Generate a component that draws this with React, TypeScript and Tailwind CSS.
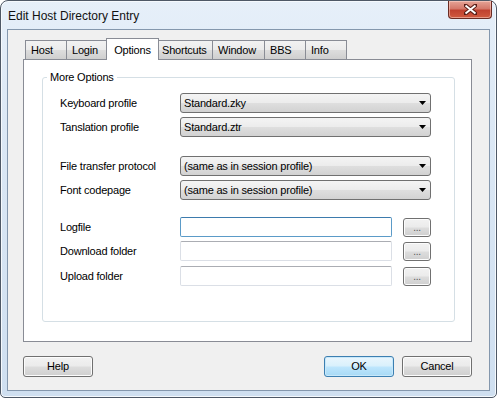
import React from 'react'

const tabs = [
  { label: 'Host', w: 'w-[42px]' },
  { label: 'Login', w: 'w-[41px]' },
  { label: 'Options', w: 'w-[53px]', active: true },
  { label: 'Shortcuts', w: 'w-[56px]' },
  { label: 'Window', w: 'w-[52px]' },
  { label: 'BBS', w: 'w-[41px]' },
  { label: 'Info', w: 'w-[41px]' },
]

function Combo({ value, className = '' }: { value: string; className?: string }) {
  return (
    <div
      className={`flex h-[20px] w-[251px] items-center justify-between rounded-[3px] border border-[#707070] bg-[linear-gradient(180deg,#f4f4f4_0%,#ececec_48%,#dedede_52%,#d2d2d2_100%)] pl-[3px] pr-[4px] ${className}`}
    >
      <span className="leading-none">{value}</span>
      <svg width="7" height="4" viewBox="0 0 7 4">
        <polygon points="0,0 7,0 3.5,4" fill="#000" />
      </svg>
    </div>
  )
}

function Field({ focused, className = '' }: { focused?: boolean; className?: string }) {
  return (
    <div className={`flex items-start gap-[11px] ${className}`}>
      <div
        className={`h-[20px] w-[212px] rounded-[2px] border bg-white ${
          focused
            ? 'border-[#5b9bc8] border-t-[#3d7bad]'
            : 'border-[#dbdfe6] border-t-[#abadb3]'
        }`}
      />
      <Btn className="mt-px h-[19px] w-[28px] text-[10px] text-[#555]">...</Btn>
    </div>
  )
}

function Btn({
  children,
  className = '',
  primary,
}: {
  children: React.ReactNode
  className?: string
  primary?: boolean
}) {
  return (
    <div
      className={`flex items-center justify-center rounded-[3px] border ${
        primary
          ? 'border-[#3c7fb1] bg-[linear-gradient(180deg,#eaf6fd_0%,#d9f0fc_48%,#bee6fd_52%,#a7d9f5_100%)] shadow-[inset_0_0_0_1px_#c8e8fa]'
          : 'border-[#707070] bg-[linear-gradient(180deg,#f2f2f2_0%,#ebebeb_48%,#dddddd_52%,#cfcfcf_100%)] shadow-[inset_0_0_0_1px_#fcfcfc]'
      } ${className}`}
    >
      {children}
    </div>
  )
}

const Label = ({ children }: { children: React.ReactNode }) => (
  <span className="w-[120px] shrink-0">{children}</span>
)

export default function App() {
  return (
    <div className="h-[398px] w-[497px] bg-white font-['Liberation_Sans',Arial,sans-serif] text-[11px] tracking-[-0.2px] text-black">
      {/* Window frame */}
      <div className="flex h-full w-full flex-col rounded-t-[8px] rounded-b-[5px] border border-[#4e5866] bg-[linear-gradient(180deg,#e6eff9_0%,#dce8f5_30%,#cfdff0_100%)] shadow-[inset_0_0_0_1px_#f5f9fd]">
        {/* Title bar */}
        <div className="flex h-[28px] shrink-0 items-start justify-between">
          <span className="mt-[6px] pl-[7px] text-[12px] tracking-normal text-[#111]">Edit Host Directory Entry</span>
          <div className="mr-[4px] flex h-[18px] w-[44px] items-center justify-center rounded-b-[4px] border border-t-0 border-[#6a2b23] bg-[linear-gradient(180deg,#e6a497_0%,#d4786a_45%,#c0412f_55%,#d05a3f_100%)] shadow-[inset_0_0_0_1px_rgba(255,220,210,0.5)]">
            <svg width="13" height="11" viewBox="0 0 13 11">
              <path
                d="M1 1 L12 10 M12 1 L1 10"
                stroke="#5a1d16"
                strokeWidth="4"
                strokeLinecap="round"
              />
              <path d="M1.5 1.5 L11.5 9.5 M11.5 1.5 L1.5 9.5" stroke="#fff" strokeWidth="2" />
            </svg>
          </div>
        </div>

        {/* Client area */}
        <div className="mx-[6px] mb-[6px] flex flex-1 flex-col border border-[#8497ad] bg-[#f0f0f0] pl-[15px] pr-[17px] pt-[8px]">
          {/* Tabs */}
          <div className="flex h-[21px] items-end pl-[2px]">
            {tabs.map((t) =>
              t.active ? (
                <div
                  key={t.label}
                  className={`${t.w} relative z-10 -mx-[2px] -mb-px flex h-[22px] items-start justify-center border border-b-0 border-[#898c95] bg-white pt-[3px]`}
                >
                  {t.label}
                </div>
              ) : (
                <div
                  key={t.label}
                  className={`${t.w} flex h-[19px] items-center border border-b-0 border-l-0 first:border-l border-[#898c95] bg-[linear-gradient(180deg,#f2f2f2_0%,#ebebeb_50%,#dddddd_51%,#cfcfcf_100%)] pl-[5px] pt-px`}
                >
                  {t.label}
                </div>
              )
            )}
          </div>

          {/* Tab page */}
          <div className="h-[283px] border border-[#898c95] bg-white pl-[18px] pr-[16px] pt-[10px]">
            <fieldset className="h-[252px] rounded-[3px] border border-[#d5dfe5] pl-[17px] pt-[9px]">
              <legend className="-ml-[13px] px-[3px] leading-[14px]">More Options</legend>
              <div className="flex items-center">
                <Label>Keyboard profile</Label>
                <Combo value="Standard.zky" />
              </div>
              <div className="mt-[4px] flex items-center">
                <Label>Tanslation profile</Label>
                <Combo value="Standard.ztr" />
              </div>
              <div className="mt-[19px] flex items-center">
                <Label>File transfer protocol</Label>
                <Combo value="(same as in session profile)" />
              </div>
              <div className="mt-[4px] flex items-center">
                <Label>Font codepage</Label>
                <Combo value="(same as in session profile)" />
              </div>
              <div className="mt-[17px] flex items-center">
                <Label>Logfile</Label>
                <Field focused />
              </div>
              <div className="mt-[4px] flex items-center">
                <Label>Download folder</Label>
                <Field />
              </div>
              <div className="mt-[5px] flex items-center">
                <Label>Upload folder</Label>
                <Field />
              </div>
            </fieldset>
          </div>

          {/* Dialog buttons */}
          <div className="mt-[14px] flex items-center">
            <Btn className="h-[21px] w-[70px]">Help</Btn>
            <Btn primary className="ml-auto h-[21px] w-[70px]">
              OK
            </Btn>
            <Btn className="ml-[8px] h-[21px] w-[70px]">Cancel</Btn>
          </div>
        </div>
      </div>
    </div>
  )
}
